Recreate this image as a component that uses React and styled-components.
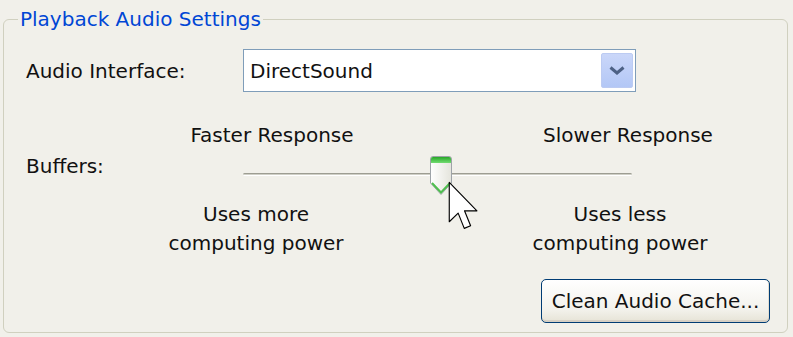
import styled, { createGlobalStyle } from "styled-components"

const Page = createGlobalStyle`
	body {
		margin: 0;
		background: #f1f0ea;
		font-family: "DejaVu Sans", "Liberation Sans", sans-serif;
		font-size: 20px;
		color: #111;
	}
`

const Window = styled.div`
	padding: 7px 0 0 3px;
	height: 337px;
	box-sizing: border-box;
`

const Group = styled.fieldset`
	margin: 0;
	width: 785px;
	min-width: 0;
	box-sizing: border-box;
	border: 1px solid #d0d0bf;
	border-radius: 6px;
	padding: 0 17px 9px 22px;
`

const Title = styled.legend`
	margin-left: -8px;
	padding: 0 2px;
	color: #0046d5;
	line-height: 24px;
`

const Row = styled.div`
	display: flex;
	align-items: center;
	margin-top: 18px;
`

const Label = styled.span`
	width: ${(p) => p.$width}px;
	flex: none;
	line-height: 28px;
	padding-top: ${(p) => p.$offset || 0}px;
`

const Combo = styled.div`
	width: 393px;
	height: 43px;
	box-sizing: border-box;
	border: 1px solid #7f9db9;
	background: #fff;
	display: flex;
	align-items: center;
	justify-content: space-between;
	padding: 0 2px 0 6px;
`

const DropButton = styled.div`
	width: 32px;
	height: 35px;
	box-sizing: border-box;
	border: 1px solid #bccbf2;
	border-radius: 2px;
	background: linear-gradient(#cad7f9, #b3c7f6);
	display: flex;
	align-items: center;
	justify-content: center;
`

const BufferRow = styled.div`
	display: flex;
	margin-top: 29px;
`

const SliderBlock = styled.div`
	width: 588px;
	display: flex;
	flex-direction: column;
`

const CaptionRow = styled.div`
	display: flex;
	justify-content: space-between;
	padding: ${(p) => p.$inset};
	margin-top: ${(p) => p.$gap || 0}px;
`

const Caption = styled.div`
	width: 200px;
	text-align: center;
	line-height: ${(p) => p.$line}px;
`

const TrackRow = styled.div`
	position: relative;
	height: 40px;
	margin-top: 7px;
`

const Track = styled.div`
	margin: 17px 0 0 87px;
	width: 389px;
	height: 3px;
	box-sizing: border-box;
	border-top: 1px solid #9d9d92;
	border-bottom: 1px solid #fff;
	border-radius: 2px;
	background: #cfcfc6;
`

const Thumb = styled.svg`
	position: absolute;
	top: 0;
	left: ${(p) => p.$left}px;
`

const Pointer = styled.svg`
	position: absolute;
	top: 25px;
	left: 292px;
`

const ButtonRow = styled.div`
	display: flex;
	justify-content: flex-end;
	margin-top: 21px;
`

const Button = styled.button`
	width: 229px;
	height: 44px;
	border: 1px solid #003c74;
	border-radius: 5px;
	background: linear-gradient(#ffffff, #f3f2ec 70%, #e6e3d6);
	box-shadow: inset 0 -2px 0 #d6d0c5, inset -1px 0 0 #e3dfd2;
	font-family: inherit;
	font-size: 20px;
	color: #111;
	padding: 0;
`

const sliderValue = 0.51

const App = () => {
	const thumbLeft = 87 + sliderValue * 389 - 11

	return (
		<Window>
			<Page />
			<Group>
				<Title>Playback Audio Settings</Title>
				<Row>
					<Label $width={217}>Audio Interface:</Label>
					<Combo>
						<span>DirectSound</span>
						<DropButton>
							<svg width="16" height="9" viewBox="0 0 16 9">
								<path d="M1.5 1.5 L8 7 L14.5 1.5" fill="none" stroke="#4d6185" strokeWidth="3" />
							</svg>
						</DropButton>
					</Combo>
				</Row>
				<BufferRow>
					<Label $width={130} $offset={31}>Buffers:</Label>
					<SliderBlock>
						<CaptionRow $inset="0 16px">
							<Caption $line={28}>Faster Response</Caption>
							<Caption $line={28}>Slower Response</Caption>
						</CaptionRow>
						<TrackRow>
							<Track />
							<Thumb $left={thumbLeft} width="22" height="40" viewBox="0 0 22 40">
								<defs>
									<linearGradient id="body" x1="0" y1="0" x2="1" y2="0">
										<stop offset="0" stopColor="#ffffff" />
										<stop offset="1" stopColor="#e4e4dc" />
									</linearGradient>
									<linearGradient id="cap" x1="0" y1="0" x2="0" y2="1">
										<stop offset="0" stopColor="#28a828" />
										<stop offset="1" stopColor="#72dc72" />
									</linearGradient>
								</defs>
								<path d="M3 0.5 H19 Q21.5 0.5 21.5 3 V27 L11 38.5 L0.5 27 V3 Q0.5 0.5 3 0.5 Z" fill="url(#body)" stroke="#9ea3a8" />
								<path d="M1 3 Q1 1 3 1 H19 Q21 1 21 3 V7 H1 Z" fill="url(#cap)" />
								<path d="M2 27 L11 36.5 L20 27" fill="none" stroke="#4fbf4f" strokeWidth="2" />
							</Thumb>
							<Pointer width="32" height="50" viewBox="0 0 12.6 19.6">
								<path d="M0.5 0.5 L0.5 16 L4 12.6 L6.4 18.6 L8.9 17.6 L6.5 11.7 L11.4 11.7 Z" fill="#fff" stroke="#000" strokeWidth="0.45" strokeLinejoin="round" />
							</Pointer>
						</TrackRow>
						<CaptionRow $inset="0 24px 0 0" $gap={4}>
							<Caption $line={29}>Uses more<br />computing power</Caption>
							<Caption $line={29}>Uses less<br />computing power</Caption>
						</CaptionRow>
					</SliderBlock>
				</BufferRow>
				<ButtonRow>
					<Button>Clean Audio Cache...</Button>
				</ButtonRow>
			</Group>
		</Window>
	)
}

export default App
